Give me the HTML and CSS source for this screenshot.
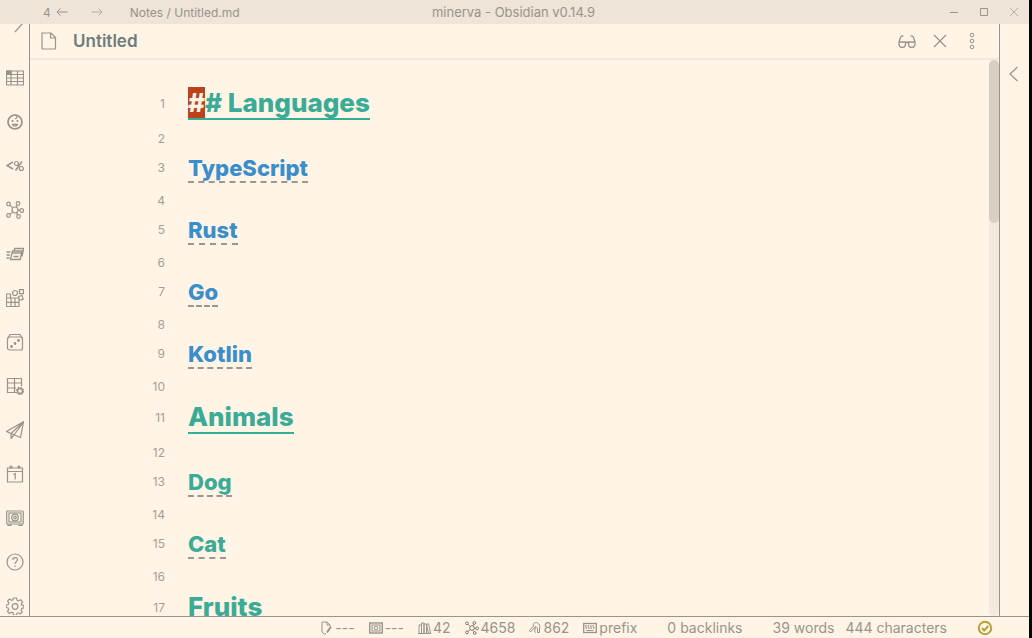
FILE: index.html
```html
<!DOCTYPE html>
<html lang="en">
<head>
<meta charset="utf-8">
<title>minerva - Obsidian v0.14.9</title>
<link rel="stylesheet" href="styles.css">
</head>
<body>
<header class="titlebar">
  <div class="titlebar-side">
    <span class="count">4</span>
    <button class="nav-button" aria-label="Back"><svg width="12" height="10" viewBox="0 0 12 10"><path d="M11.500 5H1M4.500 1.500 1 5l3.500 3.500"/></svg></button>
    <button class="nav-button forward" aria-label="Forward"><svg width="12" height="10" viewBox="0 0 12 10"><path d="M.5 5H11M7.500 1.500 11 5 7.500 8.500"/></svg></button>
    <span class="path">Notes / Untitled.md</span>
  </div>
  <div class="app-title">minerva - Obsidian v0.14.9</div>
  <div class="titlebar-side window-controls">
    <button aria-label="Minimize"><svg width="10" height="10" viewBox="0 0 10 10"><path d="M1 5.500h8"/></svg></button>
    <button aria-label="Maximize"><svg width="10" height="10" viewBox="0 0 10 10"><path d="M1.500 1.500h7v7h-7z"/></svg></button>
    <button class="faint" aria-label="Close"><svg width="10" height="10" viewBox="0 0 10 10"><path d="m1 1 8 8M9 1 1 9"/></svg></button>
  </div>
</header>
<div class="main">
  <nav class="ribbon">
    <button class="expand" aria-label="Expand"><svg viewBox="0 0 18 18"><path d="m5 1 7 7-8 9" transform="translate(5 0)"/></svg></button>
    <button aria-label="Table"><svg viewBox="0 0 18 18"><path d="M.5 2h17v14H.5zM.5 5.500h17M.5 9h17M.5 12.500h17M5 2v14M11.500 2v14"/><path class="fill" d="M.5 2H5v3.500H.5z"/></svg></button>
    <button aria-label="Face"><svg viewBox="0 0 18 18"><circle cx="9" cy="9" r="7" stroke-width="1.700"/><path d="M9 2c3 1 2 4 0 3.500M6.500 11.300h5c-.8 2.500-4.200 2.500-5 0z"/><circle class="fill" cx="6.500" cy="8" r=".5"/><circle class="fill" cx="11.500" cy="8" r=".5"/></svg></button>
    <button aria-label="Templates"><svg viewBox="0 0 18 18"><path stroke-width="1.500" d="M7 5 1 8.500 7 12M16 4.500 9.500 13.500"/><circle cx="10.500" cy="6.500" r="2"/><circle cx="15.300" cy="11.500" r="2"/></svg></button>
    <button aria-label="Graph"><svg viewBox="0 0 18 18"><circle cx="9" cy="9" r="3"/><circle cx="2.500" cy="3" r="1.800"/><circle cx="12" cy="2.500" r="1.800"/><circle cx="15.700" cy="9.500" r="1.800"/><circle cx="2.500" cy="14.500" r="1.800"/><circle cx="12.500" cy="15.500" r="1.800"/><path d="m4 4.200 2.700 2.700M11.300 4.200l-1 2M12 9.200h2M4 13.400l2.700-2.300M11.700 13.900 10.300 12"/></svg></button>
    <button aria-label="Cards"><svg viewBox="0 0 18 18"><path stroke-width="1.300" d="M6.500 6h9.500l-1.800 8.500H4.500zM6 8h9.500M8 6l.7-2.500h9l-1.800 8M7.500 11.500h5M.5 7h4M.5 10h3.500M.5 13h3"/></svg></button>
    <button aria-label="Blocks"><svg viewBox="0 0 18 18"><path d="M.5 5h4v4h8.500v8.500H.5zM.5 9H5v8.500M.5 13.300H13M9 9v8.500M13.500.7h4v4h-4zM12.500 7.500l3.500-1 1.200 3.800-3.700 1z"/><circle cx="9" cy="4" r="2.500"/></svg></button>
    <button aria-label="Random note"><svg viewBox="0 0 18 18"><rect x="1.500" y="4" width="15" height="13" rx="2"/><path d="M1.500 6 4 1.500h10L16.500 6"/><circle class="fill" cx="5.500" cy="13.500" r=".8"/><circle class="fill" cx="9" cy="10.500" r=".8"/><circle class="fill" cx="12.500" cy="7.500" r=".8"/></svg></button>
    <button aria-label="Table settings"><svg viewBox="0 0 18 18"><path d="M10 15.500H1.500v-14h14V9M1.500 6h14M1.500 11H10M8.500 1.500v14"/><circle cx="14" cy="14" r="2.500" stroke-width="1.500"/><circle cx="14" cy="14" r="3.700" stroke-dasharray="1.500 1.400"/></svg></button>
    <button aria-label="Publish"><svg viewBox="0 0 18 18"><path d="M17.500.8.5 10.500l4.500 2 9.500 4zM17.500.8 5 12.500v5l3-3.500M17.500.8 8 14"/></svg></button>
    <button aria-label="Daily note"><svg viewBox="0 0 18 18"><path d="M1.500 3h15v14h-15zM1.500 6.500h15M7.500 9.500 9.200 8.500V14.500"/><circle cx="5" cy="2" r="1"/><circle cx="13" cy="2" r="1"/></svg></button>
    <button aria-label="Vault"><svg viewBox="0 0 18 18"><rect x=".7" y="2" width="16.600" height="13" rx="1"/><rect x="3" y="4" width="12" height="9"/><circle cx="9" cy="8.500" r="3.300"/><circle cx="9" cy="8.500" r="1.300"/><path d="M2 15v1.500h3V15M13 15v1.500h3V15"/></svg></button>
    <button aria-label="Help"><svg viewBox="0 0 18 18"><circle cx="9" cy="9" r="8"/><path d="M6.700 7c0-3.200 4.800-3.200 4.800-.3C11.500 8.500 9 8.500 9 11M9 12.500V14"/></svg></button>
    <button aria-label="Settings"><svg viewBox="0 0 18 18"><path d="M7.500 1h3l.5 2.200 1.500.7 2-1.200 2 2-1.200 2 .6 1.400 2 .5v2.300l-2.100.5-.7 1.600 1.200 2-2 2-2-1.200-1.400.6-.4 1.600h-3L7 15.800l-1.500-.6-2 1.200-2-2 1.200-2-.6-1.500-2-.4V8.200l2.100-.6.6-1.500-1.200-2 2-2 2 1.200 1.400-.6z"/><circle cx="9" cy="9.500" r="2.800"/></svg></button>
  </nav>
  <section class="leaf">
    <div class="view-header">
      <svg width="16" height="18" viewBox="0 0 16 18"><path stroke-width="1.200" d="M1 1h9l4.500 4.500V17H1zM9.500 1v5h5"/></svg>
      <h2 class="view-title">Untitled</h2>
      <div class="view-actions">
        <button aria-label="Preview"><svg width="18" height="14" viewBox="0 0 18 14"><path stroke-width="1.300" d="M5.500 2.200C3 .8 2.200 4 1 8v2C1 14.500 7.500 14.500 7.500 10V8H1M12.500 2.200C15 .8 15.800 4 17 8v2c0 4.500-6.500 4.500-6.500 0V8H17M7.500 9c.8-1 2.200-1 3 0"/></svg></button>
        <button aria-label="Close"><svg width="14" height="14" viewBox="0 0 14 14"><path stroke-width="1.200" d="m1 1 12 12M13 1 1 13"/></svg></button>
        <button aria-label="More options"><svg width="6" height="18" viewBox="0 0 6 18"><circle cx="3" cy="3" r="1.800"/><circle cx="3" cy="9" r="1.800"/><circle cx="3" cy="15" r="1.800"/></svg></button>
      </div>
    </div>
    <div class="editor">
      <div class="lines">
        <div class="line h1"><span class="num">1</span><span class="head green"><mark>#</mark># Languages</span></div>
        <div class="line"><span class="num">2</span></div>
        <div class="line h2"><span class="num">3</span><span class="head blue">TypeScript</span></div>
        <div class="line"><span class="num">4</span></div>
        <div class="line h2"><span class="num">5</span><span class="head blue">Rust</span></div>
        <div class="line"><span class="num">6</span></div>
        <div class="line h2"><span class="num">7</span><span class="head blue">Go</span></div>
        <div class="line"><span class="num">8</span></div>
        <div class="line h2"><span class="num">9</span><span class="head blue">Kotlin</span></div>
        <div class="line"><span class="num">10</span></div>
        <div class="line h1"><span class="num">11</span><span class="head green">Animals</span></div>
        <div class="line"><span class="num">12</span></div>
        <div class="line h2"><span class="num">13</span><span class="head green">Dog</span></div>
        <div class="line"><span class="num">14</span></div>
        <div class="line h2"><span class="num">15</span><span class="head green">Cat</span></div>
        <div class="line"><span class="num">16</span></div>
        <div class="line h1"><span class="num">17</span><span class="head green">Fruits</span></div>
      </div>
      <div class="scroll-track"><div class="scroll-thumb"></div></div>
    </div>
  </section>
  <aside class="right-bar">
    <button aria-label="Expand right sidebar"><svg width="10" height="16" viewBox="0 0 10 16"><path stroke-width="1.200" d="M8.500 1 1 8l7.500 7"/></svg></button>
  </aside>
</div>
<footer class="status">
  <div class="group">
    <span class="item"><svg width="12" height="14" viewBox="0 0 12 14"><path d="M9 5V4L6 1H1v10l2 2h2"/><path stroke-width="2" d="m10 5.500-4 6"/><path d="M6 1v3h3"/></svg>---</span>
    <span class="item"><svg width="14" height="12" viewBox="0 0 14 12"><rect x=".7" y="1" width="12.600" height="10" stroke-width="1.400"/><rect x="3" y="3" width="8" height="6"/><circle cx="7" cy="6" r="1.800"/></svg>---</span>
    <span class="item"><svg width="13" height="12" viewBox="0 0 13 12"><path d="M1 3h2.500v8.500H1zM3.500 1H6v10.500H3.500zM6 2h2.500v9.500H6zM8.500 2.500l2-.8 2 9-2 .8zM0 11.500h13"/></svg>42</span>
    <span class="item"><svg class="dark" width="14" height="14" viewBox="0 0 18 18"><circle cx="9" cy="9" r="3"/><circle cx="2.500" cy="3" r="1.800"/><circle cx="12" cy="2.500" r="1.800"/><circle cx="15.700" cy="9.500" r="1.800"/><circle cx="2.500" cy="14.500" r="1.800"/><circle cx="12.500" cy="15.500" r="1.800"/><path d="m4 4.200 2.700 2.700M11.300 4.200l-1 2M12 9.200h2M4 13.400l2.700-2.300M11.700 13.900 10.300 12"/></svg>4658</span>
    <span class="item"><svg width="12" height="12" viewBox="0 0 12 12"><path d="M.5 8.500 4.500 4c-1-3 2-4 4-3s3 3 2 5v4.500h-2V6L6.500 4.500 1.500 10zM6.500 4.500l-1 5 1.500 1"/></svg>862</span>
    <span class="item"><svg width="14" height="12" viewBox="0 0 14 12"><rect x=".7" y="1.500" width="12.600" height="9" stroke-width="1.300"/><path stroke-width="1.300" stroke-dasharray="1.500 1" d="M2 4h10M2.500 6h9"/><path d="M3.500 8.500h7"/></svg>prefix</span>
  </div>
  <span>0 backlinks</span>
  <div class="group words"><span>39 words</span><span>444 characters</span></div>
  <svg class="sync" width="16" height="16" viewBox="0 0 16 16"><circle cx="8" cy="8" r="6.200"/><path d="m5 8 2.200 2.500L11.300 6"/></svg>
</footer>
</body>
</html>
```
FILE: styles.css
```css
* { box-sizing: border-box; }

body {
  margin: 0;
  height: 100vh;
  display: flex;
  flex-direction: column;
  overflow: hidden;
  border-right: 3px solid #060608;
  background: #fff4e5;
  color: #97948b;
  font-family: Inter, "Liberation Sans", sans-serif;
  font-size: 12px;
}

button {
  display: flex;
  align-items: center;
  justify-content: center;
  padding: 0;
  border: 0;
  background: none;
  color: inherit;
}

svg {
  display: block;
  flex: none;
  fill: none;
  stroke: currentColor;
}

.fill { fill: currentColor; }

.titlebar {
  flex: none;
  display: flex;
  align-items: center;
  height: 24px;
  background: #eee4d7;
}
.titlebar-side {
  flex: 1;
  display: flex;
  align-items: center;
}
.count { padding-left: 43px; }
.nav-button { margin-left: 5px; }
.nav-button.forward { margin-left: 23px; opacity: .6; }
.path { margin-left: 27px; }
.app-title {
  padding-left: 8px;
  font-size: 13px;
}
.window-controls {
  justify-content: flex-end;
  gap: 20px;
  padding-right: 10px;
}
.faint { opacity: .6; }

.main {
  flex: 1;
  display: flex;
  min-height: 0;
}

.ribbon {
  flex: none;
  display: flex;
  flex-direction: column;
  align-items: center;
  gap: 26px;
  width: 30px;
  overflow: hidden;
  border-right: 1px solid #99948b;
}
.ribbon button { flex: none; }
.ribbon svg {
  width: 18px;
  height: 18px;
  stroke-width: 1.2;
}
.ribbon .expand { margin: -9px 0 10px; }

.leaf {
  flex: 1;
  display: flex;
  flex-direction: column;
  min-width: 0;
}
.view-header {
  flex: none;
  display: flex;
  align-items: center;
  gap: 16px;
  height: 36px;
  padding: 0 24px 0 11px;
  border-bottom: 2px solid #f1e7da;
}
.view-title {
  flex: 1;
  margin: 0;
  color: #6d7d7b;
  font-size: 17px;
  font-weight: 600;
}
.view-actions {
  display: flex;
  align-items: center;
  gap: 17px;
}
.view-actions button:last-child { margin-left: 5px; }

.editor {
  flex: 1;
  display: flex;
  min-height: 0;
  overflow: hidden;
}
.lines {
  flex: 1;
  padding-top: 23px;
}
.line {
  display: flex;
  align-items: center;
  gap: 23px;
  height: 26px;
  padding-top: 4px;
}
.num {
  width: 135px;
  text-align: right;
  color: #a49f94;
}
.head {
  font-weight: 800;
  white-space: pre;
}
.h1, .h2 { padding-top: 0; }
.h1 { height: 40px; }
.h2 { height: 36px; }
.h1 .head {
  border-bottom: 2px solid #35ae98;
  font-size: 26px;
  line-height: 31px;
}
.h2 .head {
  padding-top: 4px;
  border-bottom: 2px dashed #99978f;
  font-size: 22px;
  line-height: 26px;
}
.green { color: #3aab97; }
.blue { color: #3a8ecb; }
mark {
  display: inline-block;
  background: #bd421c;
  color: #fff4e5;
}

.scroll-track {
  flex: none;
  width: 10px;
  border-radius: 5px;
  background: #f3e9dc;
}
.scroll-thumb {
  height: 163px;
  border-radius: 5px;
  background: #d8cfc4;
}

.right-bar {
  flex: none;
  width: 30px;
  padding: 42px 0 0 9px;
  border-left: 1px solid #99948b;
}

.status {
  flex: none;
  display: flex;
  align-items: center;
  justify-content: flex-end;
  gap: 30px;
  height: 22px;
  padding: 0 36px 0 0;
  border-top: 1px solid #99948b;
  font-size: 14px;
}
.group {
  display: flex;
  align-items: center;
  gap: 14px;
}
.words { gap: 11px; }
.item {
  display: flex;
  align-items: center;
  gap: 2px;
}
.dark { color: #655f58; }
.sync {
  color: #b5a13a;
  stroke-width: 2;
}
```
